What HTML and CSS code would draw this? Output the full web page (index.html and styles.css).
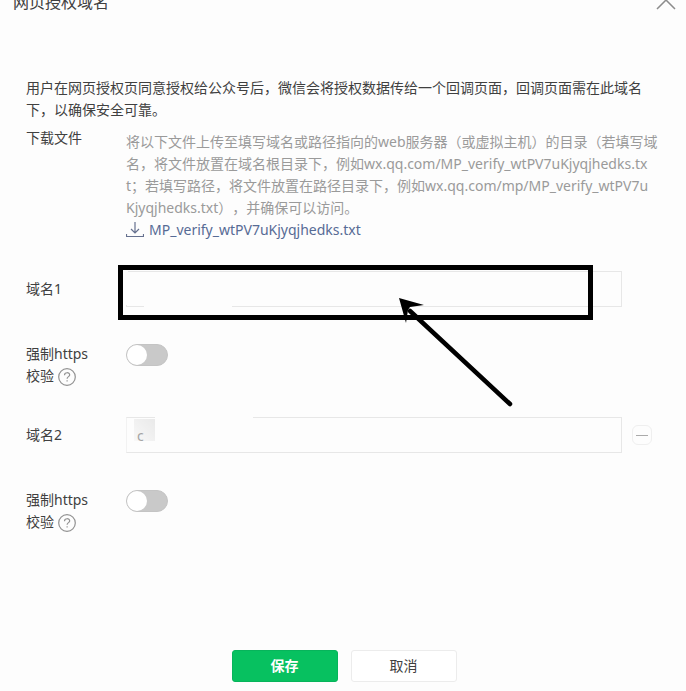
FILE: index.html
```html
<!DOCTYPE html>
<html lang="zh-CN">
<head>
<meta charset="utf-8">
<title>网页授权域名</title>
<link rel="stylesheet" href="styles.css">
</head>
<body>
<main class="dialog">
  <header class="dialog-head">
    <h1 class="dialog-title">网页授权域名</h1>
    <button class="close" type="button" aria-label="关闭">
      <svg width="20" height="20" viewBox="0 0 20 20"><path d="M1 1l18 18M19 1L1 19" fill="none" stroke="#8c8c8c" stroke-width="1.5"/></svg>
    </button>
  </header>
  <form class="form">
    <p class="intro">用户在网页授权页同意授权给公众号后，微信会将授权数据传给一个回调页面，回调页面需在此域名下，以确保安全可靠。</p>
    <div class="row row-file">
      <span class="label">下载文件</span>
      <div class="content file">
        <p class="tips">将以下文件上传至填写域名或路径指向的web服务器（或虚拟主机）的目录（若填写域<br>名，将文件放置在域名根目录下，例如wx.qq.com/MP_verify_wtPV7uKjyqjhedks.tx<br>t；若填写路径，将文件放置在路径目录下，例如wx.qq.com/mp/MP_verify_wtPV7u<br>Kjyqjhedks.txt），并确保可以访问。</p>
        <a class="download" href="#">
          <svg width="18" height="16" viewBox="0 0 18 16"><path d="M9 0v11M5 7l4 4 4-4M0 14.500h18M.5 12v2M17.500 12v2" fill="none" stroke="#66718f" stroke-width="1.200"/></svg>
          <span>MP_verify_wtPV7uKjyqjhedks.txt</span>
        </a>
      </div>
    </div>
    <div class="row row-domain">
      <label class="label" for="domain1">域名1</label>
      <div class="content field">
        <input class="text" id="domain1" type="text">
        <span class="patch patch-left"></span>
        <span class="patch patch-bottom"></span>
        <span class="highlight"></span>
        <svg class="arrow" width="116" height="112" viewBox="0 0 116 112"><path d="M112 106L12 13" stroke="#000" stroke-width="4.500" stroke-linecap="round"/><path d="M1 0L26 7L12 9L10 12L8 25Z"/></svg>
      </div>
    </div>
    <div class="row row-switch">
      <div class="label"><label for="https1">强制https校验</label> <button class="help" type="button" aria-label="帮助"><svg width="18" height="18" viewBox="0 0 18 18"><circle cx="9" cy="9" r="8.300"/><path d="M6.500 7.200c0-3.300 5.200-3.200 5.200-.3 0 1.700-2.600 1.800-2.600 3.900M9.100 12.200v1.400"/></svg></button></div>
      <div class="content"><input class="switch" id="https1" type="checkbox" role="switch"></div>
    </div>
    <div class="row row-domain">
      <label class="label" for="domain2">域名2</label>
      <div class="content field">
        <input class="text text-second" id="domain2" type="text" value="c">
        <span class="patch patch-top"></span>
        <span class="smudge"></span>
        <button class="remove" type="button" aria-label="删除"></button>
      </div>
    </div>
    <div class="row row-switch">
      <div class="label"><label for="https2">强制https校验</label> <button class="help" type="button" aria-label="帮助"><svg width="18" height="18" viewBox="0 0 18 18"><circle cx="9" cy="9" r="8.300"/><path d="M6.500 7.200c0-3.300 5.200-3.200 5.200-.3 0 1.700-2.600 1.800-2.600 3.900M9.100 12.200v1.400"/></svg></button></div>
      <div class="content"><input class="switch" id="https2" type="checkbox" role="switch"></div>
    </div>
    <footer class="actions">
      <button class="btn btn-primary" type="submit">保存</button>
      <button class="btn" type="button">取消</button>
    </footer>
  </form>
</main>
</body>
</html>
```
FILE: styles.css
```css
* { box-sizing: border-box; }
body {
  margin: 0;
  overflow: hidden;
  background: #fdfdfd;
  color: #404040;
  font: 14px/22px "Noto Sans", "Noto Sans CJK SC", sans-serif;
  text-spacing-trim: space-all;
}
button { padding: 0; border: 0; background: none; font: inherit; color: inherit; }
svg { display: block; }
h1, p { margin: 0; }
.dialog-head {
  display: flex;
  justify-content: space-between;
  align-items: flex-start;
  margin-top: -10px;
  padding: 0 10px 0 13px;
}
.dialog-title { font-size: 16px; line-height: 24px; font-weight: 400; }
.form { padding: 63px 26px 0; }
.intro { padding-right: 16px; }
.row { display: flex; }
.label { flex: none; width: 68px; margin-right: 32px; }
.content { flex: 1; min-width: 0; }
.row-file { margin-top: 6px; }
.file { padding-top: 4px; }
.tips { color: #9a9a9a; white-space: nowrap; }
.download {
  display: flex;
  align-items: center;
  gap: 5px;
  color: #576b95;
  text-decoration: none;
}
.row-domain { align-items: center; margin-top: 30px; }
.field { position: relative; display: flex; align-items: center; gap: 10px; margin-right: 8px; }
.text {
  flex: 1;
  min-width: 0;
  height: 36px;
  margin-right: 30px;
  padding: 0 10px;
  border: 1px solid #e7e7e7;
  background: transparent;
  font: inherit;
  color: #aaa;
  outline: 0;
}
.text-second { margin-right: 0; border-left-color: #f2f2f2; }
.patch { position: absolute; background: #fdfdfd; }
.patch-left { left: 0; top: 0; width: 2px; height: 34px; }
.patch-bottom { left: 18px; bottom: 0; width: 88px; height: 2px; }
.patch-top { left: 29px; top: 0; width: 98px; height: 2px; }
.smudge {
  position: absolute;
  left: 8px;
  top: 2px;
  width: 21px;
  height: 22px;
  background: linear-gradient(225deg, rgba(0, 0, 0, .08), rgba(0, 0, 0, .02));
}
.highlight {
  position: absolute;
  left: -8px;
  right: 59px;
  top: -6px;
  height: 55px;
  border: 5px solid #000;
}
.arrow { position: absolute; right: 138px; top: 27px; }
.remove {
  display: flex;
  align-items: center;
  justify-content: center;
  width: 20px;
  height: 20px;
  border: 1px solid #efefef;
  border-radius: 6px;
}
.remove::before { content: ""; width: 12px; height: 1px; background: #aaa; }
.row-switch { margin-top: 36px; }
.row-switch + .row-domain { margin-top: 30px; }
.help { display: inline-block; vertical-align: middle; }
.help svg { fill: none; stroke: #929292; stroke-width: 1.2; }
.switch {
  appearance: none;
  display: block;
  width: 42px;
  height: 22px;
  margin: 1px 0;
  border: 1px solid #c4c4c4;
  border-radius: 11px;
  background: #c9c9c9;
}
.switch::before {
  content: "";
  display: block;
  width: 20px;
  height: 20px;
  border-radius: 10px;
  background: #fff;
}
.actions { display: flex; justify-content: center; gap: 13px; margin-top: 117px; padding-left: 2px; }
.btn {
  width: 106px;
  height: 32px;
  border: 1px solid #ececec;
  border-radius: 3px;
  background: #fff;
}
.btn-primary { border-color: #07b45b; background: #07c160; color: #fff; font-weight: 700; }
```
